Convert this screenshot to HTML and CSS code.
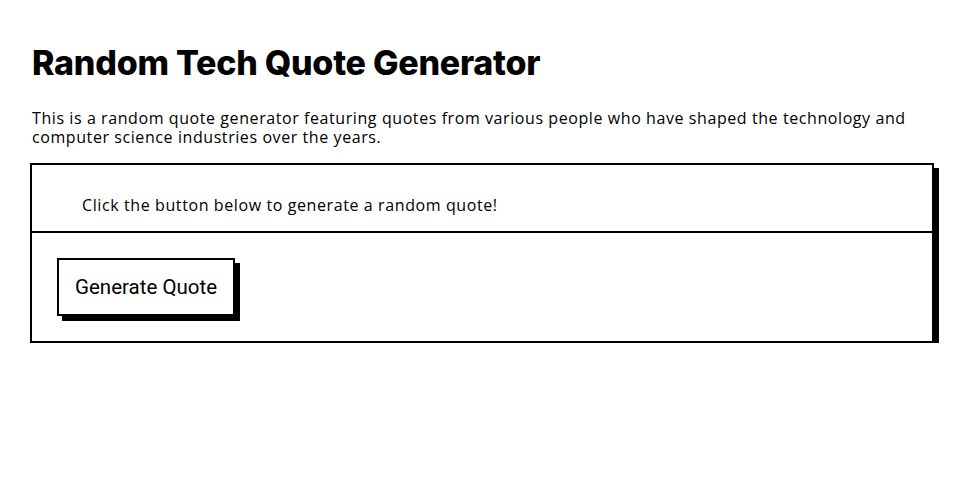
FILE: index.html
```html
<!DOCTYPE html>
<html lang="en">
<head>
<meta charset="utf-8">
<title>Random Tech Quote Generator</title>
<link rel="stylesheet" href="styles.css">
</head>
<body>
<main class="page">
  <h1 class="title">Random Tech Quote Generator</h1>
  <p class="intro">This is a random quote generator featuring quotes from various people who have shaped the technology and computer science industries over the years.</p>
  <section class="card">
    <div class="card-quote">Click the button below to generate a random quote!</div>
    <div class="card-actions">
      <button class="btn" type="button">Generate Quote</button>
    </div>
  </section>
</main>
</body>
</html>
```
FILE: styles.css
```css
* { box-sizing: border-box; }
html, body { margin: 0; background: #fff; color: #000; }
.page {
  padding: 40px 33px 0 30px;
}
.title {
  margin: 0 0 0 2px;
  font-family: "Inter", sans-serif;
  font-weight: 800;
  font-size: 34px;
  line-height: 45px;
  letter-spacing: -0.25px;
}
.intro {
  margin: 24px 0 16px 2px;
  font-family: "Open Sans", sans-serif;
  font-size: 16px;
  line-height: 19px;
  letter-spacing: 0.58px;
}
.card {
  border: 2px solid #000;
  box-shadow: 5px 5px 0 #000;
  background: #fff;
}
.card-quote {
  padding: 30px 50px 16px;
  line-height: 20px;
  font-family: "Open Sans", sans-serif;
  font-size: 16px;
  letter-spacing: 0.6px;
  border-bottom: 2px solid #000;
}
.card-actions {
  padding: 25px;
  display: flex;
}
.btn {
  height: 58px;
  border: 2px solid #000;
  background: #fff;
  box-shadow: 5px 5px 0 #000;
  padding: 0 16px;
  font-family: "Roboto", sans-serif;
  font-size: 20.5px;
  line-height: 22px;
  color: #000;
  cursor: pointer;
}
```
